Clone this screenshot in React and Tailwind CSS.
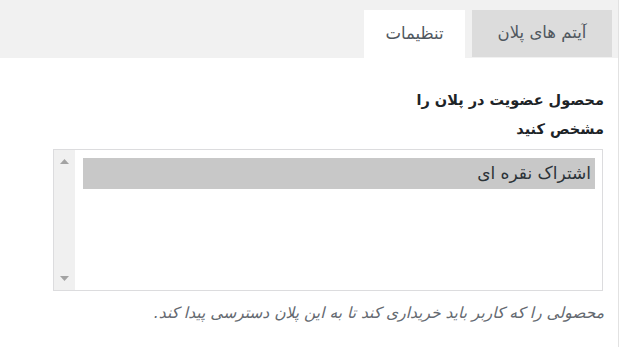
import React from "react";

const tabs = [
  { id: "items", label: "آیتم های پلان", active: false, w: "w-[140px]" },
  { id: "settings", label: "تنظیمات", active: true, w: "w-[101px]" },
];

const App = () => {
  return (
    <div className="flex h-[347px] w-full bg-white" style={{ fontFamily: '"DejaVu Sans", sans-serif' }}>
      <div dir="rtl" className="w-[619px] h-full border-r border-[#e2e2e2] bg-white">
        {/* تب ها */}
        <div className="h-[58px] bg-[#f1f1f1] flex items-end gap-[7px] pr-[6px]">
          {tabs.map((tab) => (
            <div
              key={tab.id}
              className={`${tab.w} flex items-center justify-center text-[16.5px] text-[#50575e] ${
                tab.active ? "bg-white h-[48px]" : "bg-[#dcdcdc] h-[47px] mb-[1px]"
              }`}
            >
              {tab.label}
            </div>
          ))}
        </div>

        <div className="pr-[14px] pt-[28px]">
          <p className="text-[14.5px] font-bold text-[#1d2327] leading-[29px]">
            <span className="block">محصول عضویت در پلان را</span>
            <span className="block">مشخص کنید</span>
          </p>

          <div className="mt-[5px] mr-[1px] w-[550px] h-[142px] border border-[#dcdcde] flex bg-white">
            <div className="flex-1 pt-[8px] pr-[7px] pl-[8px]">
              <div className="h-[31px] bg-[#c8c8c8] flex items-center pr-[4px] text-[17px] text-[#2c3338]">
                اشتراک نقره ای
              </div>
            </div>
            {/* اسکرول بار */}
            <div className="w-[21px] bg-[#f0f0f0] flex flex-col items-center justify-between py-[9px]">
              <svg width="9" height="5" viewBox="0 0 9 5">
                <path d="M0 5 L4.5 0 L9 5 Z" fill="#a3a3a3" />
              </svg>
              <svg width="9" height="5" viewBox="0 0 9 5">
                <path d="M0 0 L4.5 5 L9 0 Z" fill="#a3a3a3" />
              </svg>
            </div>
          </div>

          <p className="mt-[11px] text-[15.5px] italic text-[#646970]">
            محصولی را که کاربر باید خریداری کند تا به این پلان دسترسی پیدا کند.
          </p>
        </div>
      </div>
    </div>
  );
};

export default App;
